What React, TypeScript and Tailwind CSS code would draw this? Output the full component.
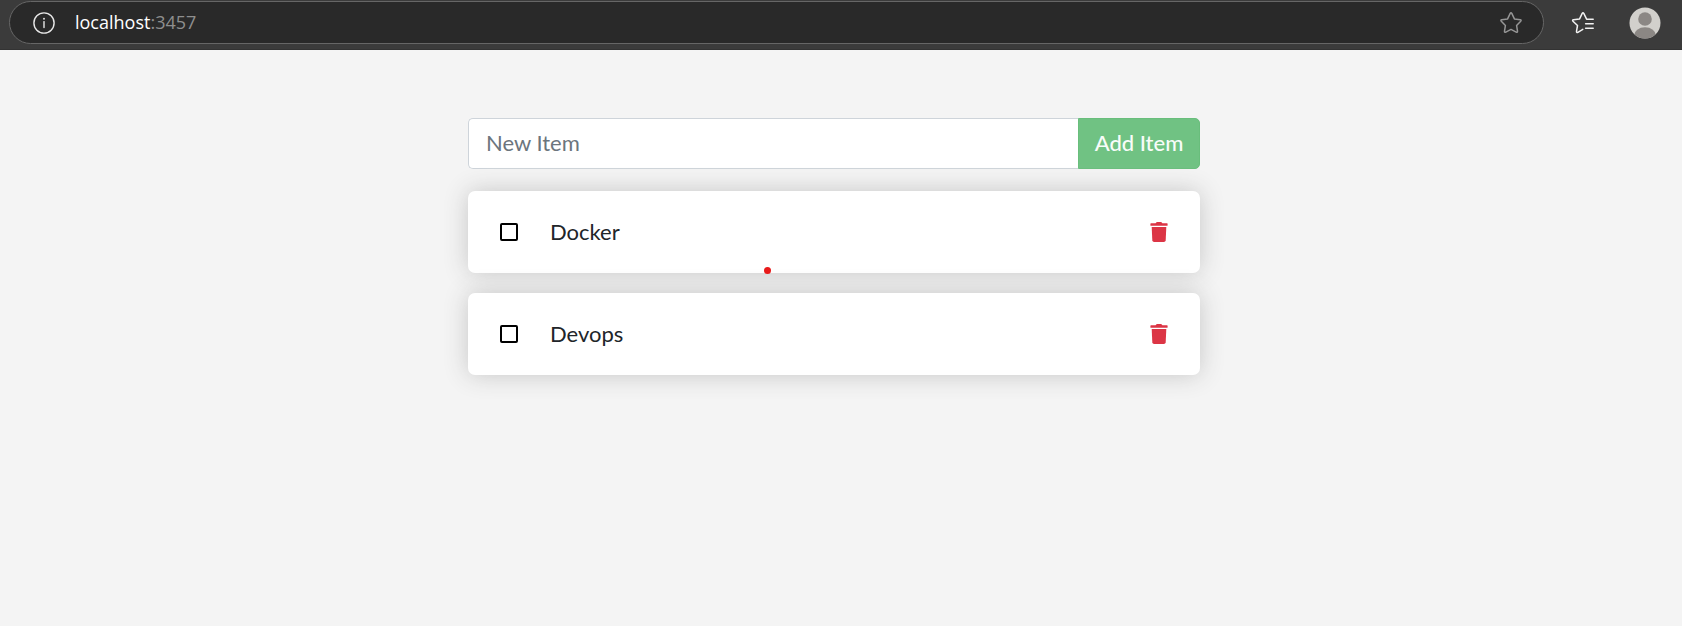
import { useState } from "react";

type Item = { id: number; name: string; completed: boolean };

function InfoIcon() {
  return (
    <svg viewBox="0 0 22 22" className="size-[22px]" fill="none" aria-hidden="true">
      <circle cx="11" cy="11" r="10.1" stroke="#e8e8e8" strokeWidth="1.4" />
      <path d="M11 9.6v6" stroke="#e8e8e8" strokeWidth="1.4" strokeLinecap="round" />
      <circle cx="11" cy="6.7" r="0.95" fill="#e8e8e8" />
    </svg>
  );
}

function StarIcon() {
  return (
    <svg viewBox="0 0 24 24" className="size-6" fill="none" stroke="#969696" strokeWidth="1.5" strokeLinejoin="round" aria-hidden="true">
      <path d="M11.2 2.4Q12 1 12.8 2.4L15.4 7.9L21.2 8.8Q22.7 9.1 21.7 10.3L17.6 14.5L18.5 20.2Q18.6 21.8 17.2 21.1L12 18.4L6.8 21.1Q5.4 21.8 5.5 20.2L6.4 14.5L2.3 10.3Q1.3 9.1 2.8 8.8L8.6 7.9Z" />
    </svg>
  );
}

function FavoritesIcon() {
  return (
    <svg viewBox="0 0 24 24" className="size-6" fill="none" stroke="#f2f2f2" strokeWidth="1.5" strokeLinejoin="round" strokeLinecap="round" aria-hidden="true">
      <path d="M22.2 8.2H15.6L12.8 2.4Q12 1 11.2 2.4L8.6 7.9L2.5 8.8Q1 9.1 2 10.3L6.5 14.5L5.5 20.4Q5.5 22 6.9 21.3L11.8 18.4" />
      <path d="M14.6 12.7H22.2M14.6 17.2H22.2" />
    </svg>
  );
}

function Avatar() {
  return (
    <svg viewBox="0 0 32 32" className="size-8" aria-hidden="true">
      <defs>
        <clipPath id="avatar-clip">
          <circle cx="16" cy="16" r="15.5" />
        </clipPath>
      </defs>
      <g clipPath="url(#avatar-clip)">
        <rect width="32" height="32" fill="#d2d0cc" />
        <circle cx="16" cy="12" r="6.8" fill="#8b8784" />
        <ellipse cx="16" cy="28.5" rx="11" ry="8.3" fill="#8b8784" />
      </g>
    </svg>
  );
}

function TrashIcon() {
  return (
    <svg viewBox="0 0 18 20" className="h-5 w-[18px]" fill="#dc3545" aria-hidden="true">
      <path d="M1 1.2H5.6L6.2.4Q6.5 0 7 0H11Q11.5 0 11.8.4L12.4 1.2H17Q17.6 1.2 17.6 1.8V3.2Q17.6 3.7 17 3.7H1Q.4 3.7 .4 3.2V1.8Q.4 1.2 1 1.2Z" />
      <path d="M1.7 5H16.3L15.7 18.2Q15.5 20 13.9 20H4.1Q2.5 20 2.3 18.2Z" />
    </svg>
  );
}

function BrowserBar() {
  return (
    <header className="flex h-[50px] items-start border-b border-[#333333] bg-[#3b3b3b] pr-[21px] pl-[9px] pt-px">
      <div className="flex h-[43px] flex-1 items-center rounded-full border border-[#666666] bg-[#292929] pr-5 pl-[23px]">
        <button type="button" aria-label="View site information">
          <InfoIcon />
        </button>
        <p className="flex-1 pb-0.5 pl-5 font-['Open_Sans',sans-serif] text-lg leading-6 text-white">
          localhost<span className="text-[#8e8e8e]">:3457</span>
        </p>
        <button type="button" aria-label="Add this page to favorites">
          <StarIcon />
        </button>
      </div>
      <div className="flex h-11 items-center gap-[34px] pl-[27px]">
        <button type="button" aria-label="Favorites">
          <FavoritesIcon />
        </button>
        <button type="button" aria-label="Profile">
          <Avatar />
        </button>
      </div>
    </header>
  );
}

export default function App() {
  const [items, setItems] = useState<Item[]>([
    { id: 1, name: "Docker", completed: false },
    { id: 2, name: "Devops", completed: false },
  ]);
  const [draft, setDraft] = useState("");

  const addItem = (e: React.FormEvent) => {
    e.preventDefault();
    const name = draft.trim();
    if (!name) return;
    setItems([...items, { id: Date.now(), name, completed: false }]);
    setDraft("");
  };
  const toggle = (id: number) =>
    setItems(items.map((i) => (i.id === id ? { ...i, completed: !i.completed } : i)));

  return (
    <div className="flex min-h-screen flex-col bg-[#f4f4f4] font-['Lato',sans-serif] text-[22px] leading-8 text-[#212529]">
      <BrowserBar />
      <main className="flex-1 pt-[68px] pr-[14px] pb-10">
        <div className="relative mx-auto w-full max-w-[732px]">
          <form onSubmit={addItem} className="mb-[22px] flex h-[51px]">
            <input
              type="text"
              aria-label="New item"
              placeholder="New Item"
              value={draft}
              onChange={(e) => setDraft(e.target.value)}
              className="min-w-0 flex-1 rounded-l-[5px] border border-r-0 border-[#ced4da] bg-white px-[17px] pb-0.5 outline-none placeholder:text-[#6c757d]"
            />
            <button
              type="submit"
              className="w-[122px] rounded-r-[5px] border border-[#69be7c] bg-[#70c283] pb-0.5 font-medium text-[#f8fcf9]"
            >
              Add Item
            </button>
          </form>
          <ul className="flex flex-col gap-5">
            {items.map((item) => (
              <li
                key={item.id}
                className="flex h-[82px] items-center rounded-[7px] bg-white px-8 shadow-[0_0_24px_#c6c6c6]"
              >
                <input
                  id={`item-${item.id}`}
                  type="checkbox"
                  checked={item.completed}
                  onChange={() => toggle(item.id)}
                  className="size-[18px] appearance-none rounded-[2px] border-2 border-black checked:bg-black"
                />
                <label htmlFor={`item-${item.id}`} className="flex-1 pl-8">
                  {item.name}
                </label>
                <button
                  type="button"
                  aria-label={`Remove ${item.name}`}
                  onClick={() => setItems(items.filter((i) => i.id !== item.id))}
                >
                  <TrashIcon />
                </button>
              </li>
            ))}
          </ul>
          <span className="absolute top-[149px] left-[296px] size-[7px] rounded-full bg-[#e81a1a]" />
        </div>
      </main>
    </div>
  );
}
